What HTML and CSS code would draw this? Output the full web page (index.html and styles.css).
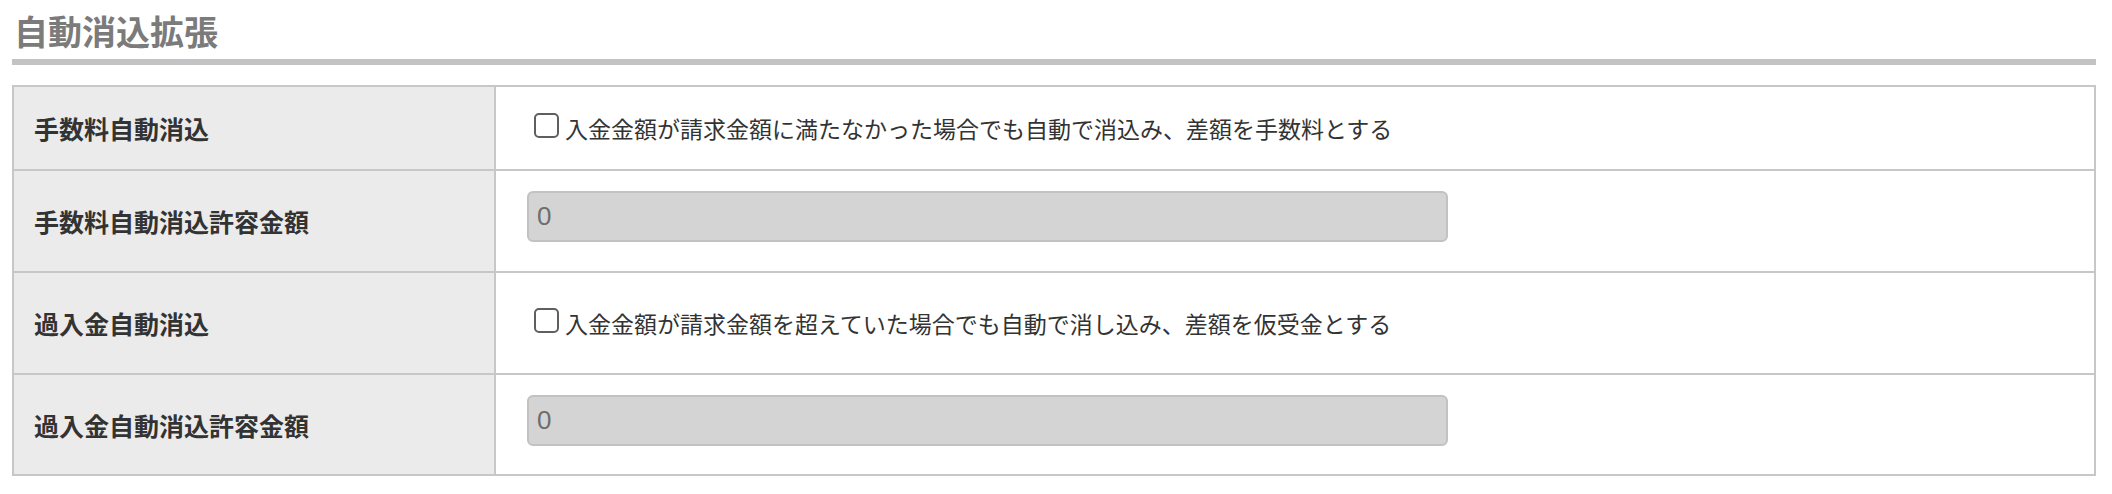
FILE: index.html
```html
<!DOCTYPE html>
<html lang="ja">
<head>
<meta charset="utf-8">
<title>自動消込拡張</title>
<link rel="stylesheet" href="styles.css">
</head>
<body>
<div class="page">
  <h2 class="section-title">自動消込拡張</h2>
  <div class="form-table">
    <div class="cell head row-short">手数料自動消込</div>
    <div class="cell body row-short">
      <label class="check"><input type="checkbox" class="check-box"><span>入金金額が請求金額に満たなかった場合でも自動で消込み、差額を手数料とする</span></label>
    </div>

    <div class="cell head row-tall">手数料自動消込許容金額</div>
    <div class="cell body row-tall input-cell">
      <input class="amount" type="text" value="0" disabled>
    </div>

    <div class="cell head row-tall">過入金自動消込</div>
    <div class="cell body row-tall">
      <label class="check"><input type="checkbox" class="check-box"><span>入金金額が請求金額を超えていた場合でも自動で消し込み、差額を仮受金とする</span></label>
    </div>

    <div class="cell head row-last">過入金自動消込許容金額</div>
    <div class="cell body row-last input-cell">
      <input class="amount" type="text" value="0" disabled>
    </div>
  </div>
</div>
</body>
</html>
```
FILE: styles.css
```css
* { box-sizing: border-box; }
html, body { margin: 0; padding: 0; background: #fff; }
body {
  font-family: "Noto Sans CJK JP", "Noto Sans", sans-serif;
  color: #333;
}
.page {
  padding: 14px 16px 0 12px;
}
.section-title {
  margin: 0;
  font-size: 34px;
  line-height: 34px;
  font-weight: 700;
  color: #7b7b7b;
  padding: 0 0 11px 2px;
  border-bottom: 6px solid #c3c3c3;
}
.form-table {
  margin-top: 20px;
  display: grid;
  grid-template-columns: 482px 1fr;
  border-top: 2px solid #c7c7c7;
  border-left: 2px solid #c7c7c7;
}
.cell {
  border-right: 2px solid #c7c7c7;
  border-bottom: 2px solid #c7c7c7;
  display: flex;
  align-items: center;
}
.row-short { height: 84px; }
.row-tall { height: 102px; }
.row-last { height: 101px; }
.head {
  background: #ebebeb;
  font-size: 25px;
  font-weight: 700;
  color: #333;
  padding-left: 20px;
}
.body {
  background: #fff;
  padding-left: 38px;
}
.input-cell {
  align-items: flex-start;
  padding-left: 31px;
  padding-top: 20px;
}
.check {
  display: flex;
  align-items: center;
  font-size: 23px;
  color: #333;
}
.check-box {
  appearance: none;
  -webkit-appearance: none;
  width: 25px;
  height: 25px;
  margin: 0 6px 6px 0;
  border: 2px solid #5f5f5f;
  border-radius: 5px;
  background: #fff;
  flex: none;
}
.amount {
  width: 921px;
  height: 51px;
  margin: 0;
  padding: 0 8px;
  border: 2px solid #c2c2c2;
  border-radius: 6px;
  background: #d4d4d4;
  color: #6e6e6e;
  font-family: "Liberation Sans", Arial, sans-serif;
  font-size: 26px;
}
```
